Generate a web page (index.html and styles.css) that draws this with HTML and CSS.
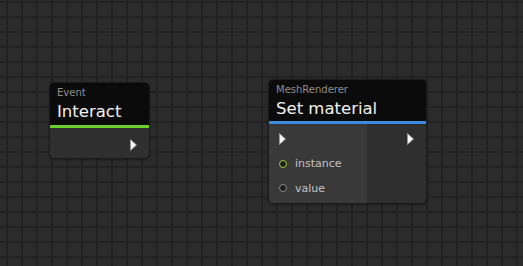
FILE: index.html
```html
<!DOCTYPE html>
<html lang="en">
<head>
    <meta charset="UTF-8">
    <title>Graph</title>
    <link rel="stylesheet" href="styles.css">
</head>
<body>
    <div class="canvas">
        <!-- Event node -->
        <div class="node node-event">
            <div class="node-header header-event">
                <div class="node-type">Event</div>
                <div class="node-title">Interact</div>
            </div>
            <div class="node-body">
                <div class="col col-out">
                    <div class="row">
                        <svg class="flow" width="7" height="12" viewBox="0 0 7 12"><polygon points="0.5,0.5 6.5,6 0.5,11.5" /></svg>
                    </div>
                </div>
            </div>
        </div>

        <!-- MeshRenderer node -->
        <div class="node node-mesh">
            <div class="node-header header-mesh">
                <div class="node-type">MeshRenderer</div>
                <div class="node-title">Set material</div>
            </div>
            <div class="node-body">
                <div class="col col-in">
                    <div class="row">
                        <svg class="flow" width="7" height="12" viewBox="0 0 7 12"><polygon points="0.5,0.5 6.5,6 0.5,11.5" /></svg>
                    </div>
                    <div class="row">
                        <span class="port port-object"></span>
                        <span class="port-label">instance</span>
                    </div>
                    <div class="row">
                        <span class="port port-value"></span>
                        <span class="port-label">value</span>
                    </div>
                </div>
                <div class="col col-out">
                    <div class="row">
                        <svg class="flow" width="7" height="12" viewBox="0 0 7 12"><polygon points="0.5,0.5 6.5,6 0.5,11.5" /></svg>
                    </div>
                </div>
            </div>
        </div>
    </div>
</body>
</html>
```

FILE: styles.css
```css
html, body {
    margin: 0;
    padding: 0;
}
body {
    font-family: 'DejaVu Sans', Verdana, sans-serif;
    width: 523px;
    height: 266px;
    overflow: hidden;
    background-color: #2b2b2b;
}
.canvas {
    position: relative;
    width: 523px;
    height: 266px;
    background-image:
        linear-gradient(to right, #222 2px, transparent 2px),
        linear-gradient(to bottom, #222 2px, transparent 2px);
    background-size: 15px 15px;
    background-position: 6px 1px;
}
.node {
    position: absolute;
    border: 1px solid #1b1b1b;
    border-radius: 5px;
    overflow: hidden;
    background: #2f2f2f;
    box-shadow: 0 1px 2px rgba(0, 0, 0, 0.35);
    display: flex;
    flex-direction: column;
}
.node-event {
    left: 49px;
    top: 82px;
    width: 99px;
    height: 75px;
}
.node-mesh {
    left: 268px;
    top: 79px;
    width: 157px;
    height: 123px;
}
.node-header {
    background: #0b0b0b;
    padding: 4px 7px 0 7px;
}
.header-event {
    height: 38px;
    border-bottom: 3px solid #6cd02c;
}
.header-mesh {
    height: 37px;
    border-bottom: 3px solid #3a8de0;
}
.node-type {
    font-size: 10px;
    color: #8e8e8e;
    line-height: 12px;
}
.node-title {
    font-size: 16.5px;
    color: #f2f2f2;
    line-height: 22px;
    margin-top: 2px;
}
.node-body {
    flex: 1;
    display: flex;
}
.col {
    display: flex;
    flex-direction: column;
    padding-top: 3px;
}
.col-in {
    width: 98px;
    background: #393939;
    padding-left: 10px;
    box-sizing: border-box;
}
.col-out {
    flex: 1;
    align-items: flex-end;
    padding-right: 12px;
}
.node-event .col-out {
    padding-top: 5px;
}
.row {
    height: 24.5px;
    display: flex;
    align-items: center;
    gap: 8px;
}
.row + .row {
    margin-top: 0;
}
.flow polygon {
    fill: #f4f4f4;
    stroke: #9a9a9a;
    stroke-width: 0.8;
}
.port {
    width: 6px;
    height: 6px;
    border-radius: 50%;
    background: #1e1e1e;
    flex: none;
}
.port-object {
    border: 1.5px solid #9ccc3c;
}
.port-value {
    border: 1.5px solid #8a8a8a;
}
.port-label {
    font-size: 11px;
    color: #c4c4c4;
}
```
